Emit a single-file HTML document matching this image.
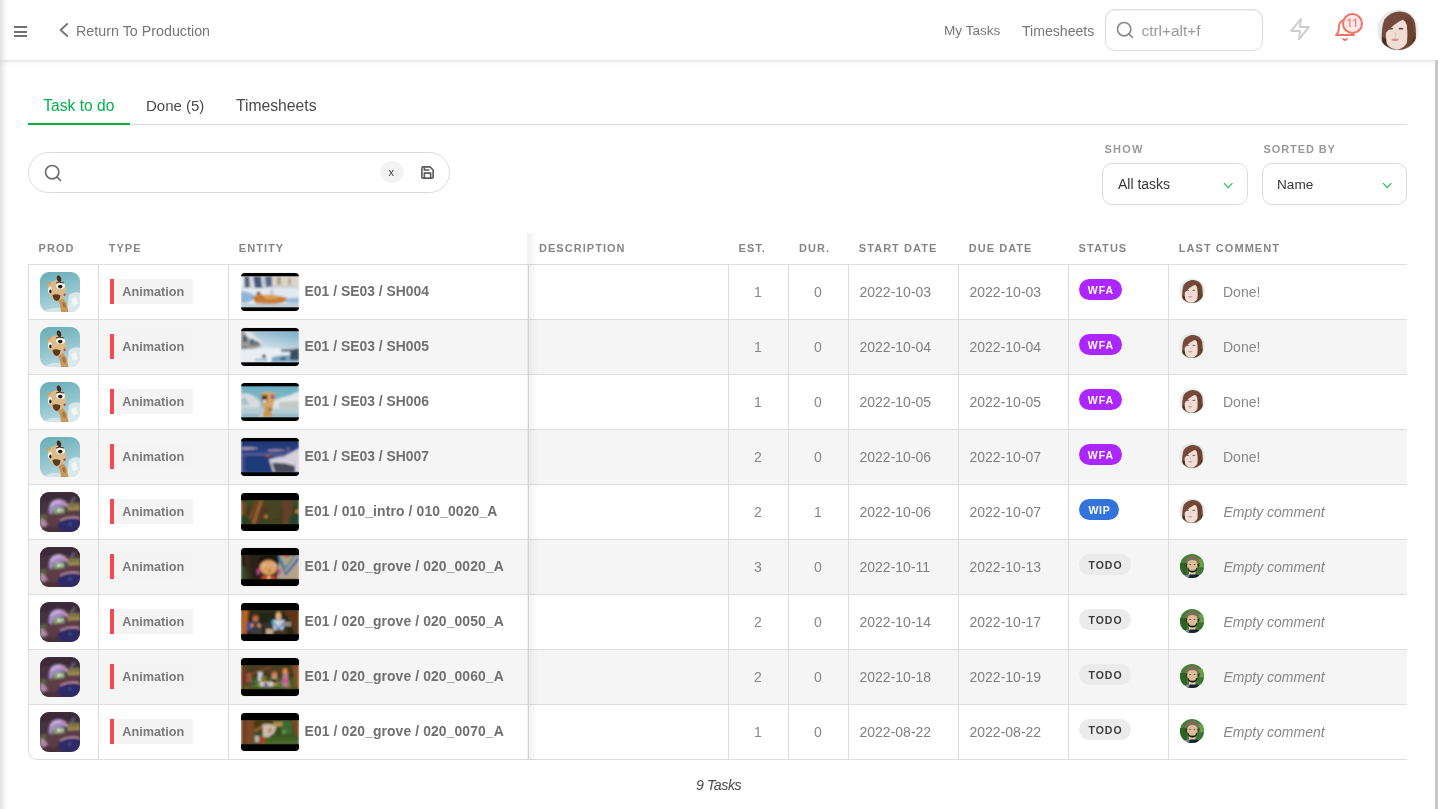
<!DOCTYPE html><html><head><meta charset="utf-8"><style>
html,body{margin:0;padding:0;background:#fff;width:1438px;height:809px;overflow:hidden;position:relative}
#root{position:absolute;left:0;top:0;width:1438px;height:809px;will-change:transform}
.t{position:absolute;white-space:nowrap;line-height:1;font-family:"Liberation Sans",sans-serif}
.c{text-align:center}
#topbar{position:absolute;left:0;top:0;width:1438px;height:60px;background:#fff;box-shadow:0 1px 5px rgba(0,0,0,0.15)}
#lshadow{position:absolute;left:0;top:0;width:8px;height:809px;background:linear-gradient(to right,rgba(0,0,0,0.12),rgba(0,0,0,0.03) 60%,rgba(0,0,0,0))}
#sbar{position:absolute;left:1435px;top:60px;width:3px;height:749px;background:#c8c8c8}
.prod{position:absolute;width:40px;height:40px;border-radius:9px;overflow:hidden}
.thumb{position:absolute;width:60px;height:39px;border-radius:3px;overflow:hidden;background:#000}
.av-woman,.av-man{position:absolute;border-radius:50%;overflow:hidden}
.av-woman{background:radial-gradient(ellipse 34% 40% at 50% 56%,#f0d6c6 0%,#e8c6b2 70%,rgba(0,0,0,0) 72%),radial-gradient(ellipse 48% 55% at 50% 50%,#6a3a2a 0%,#5a3022 75%,rgba(0,0,0,0) 77%),#e9ece8}
.av-man{background:radial-gradient(ellipse 28% 32% at 50% 48%,#d5ab88 0%,#c49a76 70%,rgba(0,0,0,0) 72%),radial-gradient(ellipse 40% 22% at 50% 100%,#1e2a34 0%,#1e2a34 90%,rgba(0,0,0,0) 92%),radial-gradient(ellipse 34% 28% at 50% 28%,#5a4030 0%,#5a4030 80%,rgba(0,0,0,0) 82%),#4f7f45}
.ice{background:radial-gradient(ellipse 22% 30% at 45% 40%,#c9a574 0%,#b58c5a 70%,rgba(0,0,0,0) 72%),linear-gradient(100deg,rgba(0,0,0,0) 50%,#b08050 51%,#c09060 62%,rgba(0,0,0,0) 63%),linear-gradient(160deg,#6fb3bb 0%,#8cc4cc 50%,#d6e8ec 100%)}
.mush{background:radial-gradient(ellipse 38% 24% at 45% 40%,#b7a3c6 0%,#9a86ad 70%,rgba(0,0,0,0) 72%),radial-gradient(ellipse 70% 30% at 60% 85%,#5b4a6a 0%,#4a3a58 70%,rgba(0,0,0,0) 72%),linear-gradient(160deg,#2e2436 0%,#3d3040 50%,#2a2030 100%)}
.t1{background:linear-gradient(#000 0,#000 4px,rgba(0,0,0,0) 4px,rgba(0,0,0,0) 35px,#000 35px),radial-gradient(ellipse 30% 14% at 45% 55%,#c88a4a,rgba(0,0,0,0) 80%),linear-gradient(#7c8ea0 4px,#a9b8c4 14px,#dfe8ee 20px,#c8d8e4 35px)}
.t2{background:linear-gradient(#000 0,#000 4px,rgba(0,0,0,0) 4px,rgba(0,0,0,0) 35px,#000 35px),linear-gradient(90deg,rgba(120,120,120,0.6) 0,rgba(0,0,0,0) 30%),linear-gradient(#8fb5cc 4px,#c6d8e2 16px,#e6eef2 24px,#b8c8d2 35px)}
.t3{background:linear-gradient(#000 0,#000 4px,rgba(0,0,0,0) 4px,rgba(0,0,0,0) 35px,#000 35px),radial-gradient(ellipse 16% 40% at 50% 55%,#c49a5a,rgba(0,0,0,0) 80%),linear-gradient(#7fb8d0 4px,#bcd6e0 18px,#e2ecef 24px,#a8c8d8 35px)}
.t4{background:linear-gradient(#000 0,#000 4px,rgba(0,0,0,0) 4px,rgba(0,0,0,0) 35px,#000 35px),linear-gradient(100deg,rgba(0,0,0,0) 55%,#c8c8d0 56%,#8a8a98 100%),linear-gradient(#2a3a6a 4px,#7a7aa0 14px,#3a4a7a 20px,#1a2a4a 35px)}
.t5{background:linear-gradient(#000 0,#000 6px,rgba(0,0,0,0) 6px,rgba(0,0,0,0) 32px,#000 32px),linear-gradient(90deg,#3a3018,#5a4a20 30%,#3a3a18 60%,#4a4020)}
.t6{background:linear-gradient(#000 0,#000 4px,rgba(0,0,0,0) 4px,rgba(0,0,0,0) 33px,#000 33px),radial-gradient(ellipse 18% 40% at 40% 55%,#d8a888,rgba(0,0,0,0) 80%),linear-gradient(90deg,#2a2a20,#4a3a2a 50%,#b8c0c8 70%,#3a5a7a)}
.t7{background:linear-gradient(#000 0,#000 4px,rgba(0,0,0,0) 4px,rgba(0,0,0,0) 33px,#000 33px),radial-gradient(ellipse 40% 40% at 55% 60%,#a89078,rgba(0,0,0,0) 80%),linear-gradient(90deg,#4a2a18,#3a2a20 50%,#5a3a20)}
.t8{background:linear-gradient(#000 0,#000 6px,rgba(0,0,0,0) 6px,rgba(0,0,0,0) 33px,#000 33px),linear-gradient(#3a3a20 6px,#4a5a30 20px,#5a6a30 33px)}
.t9{background:linear-gradient(#000 0,#000 6px,rgba(0,0,0,0) 6px,rgba(0,0,0,0) 33px,#000 33px),linear-gradient(90deg,#4a3020,#6a5a40 50%,#3a5a28)}
</style></head><body><div id="root"><div id="topbar"></div>
<div style="position:absolute;left:14px;top:26px;width:13px;height:2px;background:#727272"></div>
<div style="position:absolute;left:14px;top:30.5px;width:13px;height:2px;background:#727272"></div>
<div style="position:absolute;left:14px;top:35px;width:13px;height:2px;background:#727272"></div>
<svg style="position:absolute;left:56px;top:22px" width="16" height="16" viewBox="0 0 16 16"><polyline points="11.2,2 4.6,8 11.2,14" fill="none" stroke="#777" stroke-width="1.9" stroke-linecap="round" stroke-linejoin="round"/></svg>
<div class="t" style="left:76px;top:23.50px;font-size:14.3px;color:#777;font-weight:400;font-style:normal;letter-spacing:0px;">Return To Production</div>
<div class="t" style="left:944px;top:24.09px;font-size:13.6px;color:#777;font-weight:400;font-style:normal;letter-spacing:0px;">My Tasks</div>
<div class="t" style="left:1022px;top:23.66px;font-size:14.1px;color:#777;font-weight:400;font-style:normal;letter-spacing:0px;">Timesheets</div>
<div style="position:absolute;left:1105px;top:9px;width:156px;height:40px;border:1px solid #dcdcdc;border-radius:10px;box-shadow:inset 0 1px 2px rgba(0,0,0,0.06)"></div>
<svg style="position:absolute;left:1115px;top:20px" width="20" height="20" viewBox="0 0 24 24"><circle cx="11" cy="11" r="8" fill="none" stroke="#8a8a8a" stroke-width="2"/><line x1="21" y1="21" x2="16.65" y2="16.65" stroke="#8a8a8a" stroke-width="2" stroke-linecap="round"/></svg>
<div class="t" style="left:1141.5px;top:22.96px;font-size:15.4px;color:#9a9a9a;font-weight:400;font-style:normal;letter-spacing:0px;">ctrl+alt+f</div>
<svg style="position:absolute;left:1288px;top:17px" width="24" height="24" viewBox="0 0 24 24"><polygon points="13 2 3 14 12 14 11 22 21 10 12 10 13 2" fill="none" stroke="#cfcfcf" stroke-width="2" stroke-linejoin="round"/></svg>
<svg style="position:absolute;left:1333px;top:18px" width="24" height="24" viewBox="0 0 24 24"><path d="M18 8A6 6 0 0 0 6 8c0 7-3 9-3 9h18s-3-2-3-9" fill="none" stroke="#f07368" stroke-width="2" stroke-linecap="round" stroke-linejoin="round"/><path d="M13.73 21a2 2 0 0 1-3.46 0" fill="none" stroke="#f07368" stroke-width="2" stroke-linecap="round"/></svg>
<div style="position:absolute;left:1342px;top:13px;width:17px;height:17px;border:2px solid #f07368;border-radius:50%;background:#fde9e8;"></div>
<svg style="position:absolute;left:1340px;top:15px" width="24" height="16" viewBox="0 0 24 16"><path d="M7.3 5.9 L9.9 4.1 L9.9 12" fill="none" stroke="#f07368" stroke-width="1.15" stroke-linejoin="round"/><path d="M13.1 5.9 L15.7 4.1 L15.7 12" fill="none" stroke="#f07368" stroke-width="1.15" stroke-linejoin="round"/></svg>
<div style="position:absolute;left:1378px;top:10px;width:40px;height:40px;border-radius:20.0px;overflow:hidden;box-shadow:0 0 0 0.6px rgba(150,220,150,0.45);"><svg width="40" height="40" viewBox="0 0 24 24" preserveAspectRatio="none" style="display:block"><defs><filter id="wftop" filterUnits="userSpaceOnUse" x="0" y="0" width="24" height="24"><feGaussianBlur stdDeviation="0.27"/></filter></defs>
<rect width="24" height="24" fill="#e7e9ec"/>
<g filter="url(#wftop)">
<path d="M2.4 22 Q1.6 10 4 5.5 Q8 0.6 13.5 0.9 Q20.5 1.5 22.3 8 Q23.2 14 22.5 22 L19 24.5 L5 24.5Z" fill="#74483a"/>
<path d="M2.6 16 Q2.5 21 5 23 L6 18Z" fill="#4e2e24"/>
<path d="M21.8 15 Q22.2 21 19.5 23.5 L18.5 18Z" fill="#4e2e24"/>
<path d="M4.8 11 Q5.2 6 10 5 Q16 4.5 17.3 9 Q18 16 17.2 20 Q14.8 23.6 11.5 23.8 Q7.2 23.5 5.2 20 Q4.4 16 4.8 11Z" fill="#f0ddd3"/>
<path d="M3.6 13.5 Q4.2 4.5 11.5 3 Q15.8 2.6 17.2 4.8 Q12.5 6.6 9.8 8.8 Q7.2 11 4.6 13.8Z" fill="#74483a"/>
<path d="M16.2 4.2 Q18.6 10 18.2 21 L19.8 23 Q22.6 14 20.2 6Z" fill="#6a402f"/>
<ellipse cx="7.6" cy="11.2" rx="1.5" ry="0.55" fill="#6a4a42"/>
<ellipse cx="13.8" cy="11.2" rx="1.5" ry="0.55" fill="#6a4a42"/>
<path d="M10.2 13.5 Q11 15.5 10.6 15.8" stroke="#d8b8a8" stroke-width="0.6" fill="none"/>
<ellipse cx="10.3" cy="17.8" rx="2.2" ry="0.75" fill="#cf9c94"/>
</g></svg></div>
<div class="t" style="left:43.3px;top:97.59px;font-size:15.6px;color:#00b24a;font-weight:400;font-style:normal;letter-spacing:0px;">Task to do</div>
<div class="t" style="left:146px;top:98.10px;font-size:15px;color:#4a4a4a;font-weight:400;font-style:normal;letter-spacing:0px;">Done (5)</div>
<div class="t" style="left:236px;top:97.51px;font-size:15.7px;color:#4a4a4a;font-weight:400;font-style:normal;letter-spacing:0px;">Timesheets</div>
<div style="position:absolute;left:28px;top:124px;width:1379px;height:1px;background:#dbdbdb"></div>
<div style="position:absolute;left:28px;top:123px;width:102px;height:2px;background:#00b24a"></div>
<div style="position:absolute;left:28px;top:152px;width:420px;height:39px;border:1px solid #dbdbdb;border-radius:21px"></div>
<svg style="position:absolute;left:43px;top:163px" width="20" height="20" viewBox="0 0 24 24"><circle cx="11" cy="11" r="8" fill="none" stroke="#6e6e6e" stroke-width="2"/><line x1="21" y1="21" x2="16.65" y2="16.65" stroke="#6e6e6e" stroke-width="2" stroke-linecap="round"/></svg>
<div style="position:absolute;left:380px;top:161px;width:24px;height:22px;border-radius:50%;background:#f3f3f3"></div>
<div class="t" style="left:388.5px;top:166.69px;font-size:11px;color:#444;font-weight:400;font-style:normal;letter-spacing:0px;">x</div>
<svg style="position:absolute;left:420px;top:165px" width="15" height="15" viewBox="0 0 24 24"><path d="M19 21H5a2 2 0 0 1-2-2V5a2 2 0 0 1 2-2h11l5 5v11a2 2 0 0 1-2 2z" fill="none" stroke="#5a5a5a" stroke-width="2.6" stroke-linejoin="round"/><polyline points="17 21 17 13 7 13 7 21" fill="none" stroke="#5a5a5a" stroke-width="2.6"/><polyline points="7 3 7 8 15 8" fill="none" stroke="#5a5a5a" stroke-width="2.6"/></svg>
<div class="t" style="left:1104.5px;top:143.69px;font-size:11px;color:#999;font-weight:700;font-style:normal;letter-spacing:1.2px;">SHOW</div>
<div class="t" style="left:1263.5px;top:143.69px;font-size:11px;color:#999;font-weight:700;font-style:normal;letter-spacing:0.9px;">SORTED BY</div>
<div style="position:absolute;left:1102px;top:163px;width:144px;height:40px;border:1px solid #dbdbdb;border-radius:10px"></div>
<div class="t" style="left:1118px;top:177.25px;font-size:14px;color:#363636;font-weight:400;font-style:normal;letter-spacing:0px;">All tasks</div>
<svg style="position:absolute;left:1223px;top:182px" width="11" height="7" viewBox="0 0 11 7"><polyline points="1,1.2 5.2,5.6 9.4,1.2" fill="none" stroke="#1fbf55" stroke-width="1.15"/></svg>
<div style="position:absolute;left:1262px;top:163px;width:143px;height:40px;border:1px solid #dbdbdb;border-radius:10px"></div>
<div class="t" style="left:1277px;top:177.59px;font-size:13.6px;color:#363636;font-weight:400;font-style:normal;letter-spacing:0px;">Name</div>
<svg style="position:absolute;left:1382px;top:182px" width="11" height="7" viewBox="0 0 11 7"><polyline points="1,1.2 5.2,5.6 9.4,1.2" fill="none" stroke="#1fbf55" stroke-width="1.15"/></svg>
<div class="t" style="left:38.6px;top:243.09px;font-size:11px;color:#868686;font-weight:700;font-style:normal;letter-spacing:1.05px;">PROD</div>
<div class="t" style="left:108.7px;top:243.09px;font-size:11px;color:#868686;font-weight:700;font-style:normal;letter-spacing:1.05px;">TYPE</div>
<div class="t" style="left:238.8px;top:243.09px;font-size:11px;color:#868686;font-weight:700;font-style:normal;letter-spacing:1.05px;">ENTITY</div>
<div class="t" style="left:538.9px;top:243.09px;font-size:11px;color:#868686;font-weight:700;font-style:normal;letter-spacing:1.05px;">DESCRIPTION</div>
<div class="t" style="left:738.5px;top:243.09px;font-size:11px;color:#868686;font-weight:700;font-style:normal;letter-spacing:1.05px;">EST.</div>
<div class="t" style="left:799px;top:243.09px;font-size:11px;color:#868686;font-weight:700;font-style:normal;letter-spacing:1.05px;">DUR.</div>
<div class="t" style="left:858.8px;top:243.09px;font-size:11px;color:#868686;font-weight:700;font-style:normal;letter-spacing:1.05px;">START DATE</div>
<div class="t" style="left:968.7px;top:243.09px;font-size:11px;color:#868686;font-weight:700;font-style:normal;letter-spacing:1.05px;">DUE DATE</div>
<div class="t" style="left:1078.6px;top:243.09px;font-size:11px;color:#868686;font-weight:700;font-style:normal;letter-spacing:1.05px;">STATUS</div>
<div class="t" style="left:1178.8px;top:243.09px;font-size:11px;color:#868686;font-weight:700;font-style:normal;letter-spacing:1.05px;">LAST COMMENT</div>
<div style="position:absolute;left:28px;top:264px;width:1379px;height:495px;border-bottom-left-radius:8px;overflow:hidden">
<div style="position:absolute;left:0;top:55px;width:1379px;height:55px;background:#f5f5f5"></div>
<div style="position:absolute;left:0;top:165px;width:1379px;height:55px;background:#f5f5f5"></div>
<div style="position:absolute;left:0;top:275px;width:1379px;height:55px;background:#f5f5f5"></div>
<div style="position:absolute;left:0;top:385px;width:1379px;height:55px;background:#f5f5f5"></div>
</div>
<div style="position:absolute;left:28px;top:264px;width:1379px;height:1px;background:#dddddd"></div>
<div style="position:absolute;left:28px;top:319px;width:1379px;height:1px;background:#dddddd"></div>
<div style="position:absolute;left:28px;top:374px;width:1379px;height:1px;background:#dddddd"></div>
<div style="position:absolute;left:28px;top:429px;width:1379px;height:1px;background:#dddddd"></div>
<div style="position:absolute;left:28px;top:484px;width:1379px;height:1px;background:#dddddd"></div>
<div style="position:absolute;left:28px;top:539px;width:1379px;height:1px;background:#dddddd"></div>
<div style="position:absolute;left:28px;top:594px;width:1379px;height:1px;background:#dddddd"></div>
<div style="position:absolute;left:28px;top:649px;width:1379px;height:1px;background:#dddddd"></div>
<div style="position:absolute;left:28px;top:704px;width:1379px;height:1px;background:#dddddd"></div>
<div style="position:absolute;left:36px;top:759px;width:1371px;height:1px;background:#dddddd"></div>
<div style="position:absolute;left:28px;top:264px;width:1px;height:487px;background:#dddddd"></div>
<div style="position:absolute;left:98px;top:264px;width:1px;height:495px;background:#dddddd"></div>
<div style="position:absolute;left:228px;top:264px;width:1px;height:495px;background:#dddddd"></div>
<div style="position:absolute;left:528px;top:264px;width:1px;height:495px;background:#dddddd"></div>
<div style="position:absolute;left:728px;top:264px;width:1px;height:495px;background:#dddddd"></div>
<div style="position:absolute;left:788px;top:264px;width:1px;height:495px;background:#dddddd"></div>
<div style="position:absolute;left:848px;top:264px;width:1px;height:495px;background:#dddddd"></div>
<div style="position:absolute;left:958px;top:264px;width:1px;height:495px;background:#dddddd"></div>
<div style="position:absolute;left:1068px;top:264px;width:1px;height:495px;background:#dddddd"></div>
<div style="position:absolute;left:1168px;top:264px;width:1px;height:495px;background:#dddddd"></div>
<div style="position:absolute;left:28px;top:743px;width:16px;height:17px;border-left:1px solid #ddd;border-bottom:1px solid #ddd;border-bottom-left-radius:9px;box-sizing:border-box"></div>
<div style="position:absolute;left:527px;top:233px;width:11px;height:527px;background:linear-gradient(to right,rgba(0,0,0,0.06),rgba(0,0,0,0))"></div>
<div style="position:absolute;left:40px;top:272px;width:40px;height:40px;border-radius:9px;overflow:hidden;"><svg width="40" height="40" viewBox="0 0 40 40" preserveAspectRatio="none" style="display:block"><defs><linearGradient id="ig0" x1="0" y1="0" x2="0.3" y2="1"><stop offset="0" stop-color="#66acb5"/><stop offset="0.6" stop-color="#90c4cd"/><stop offset="1" stop-color="#b5d6dd"/></linearGradient>
<filter id="if0" filterUnits="userSpaceOnUse" x="0" y="0" width="40" height="40"><feGaussianBlur stdDeviation="0.75" edgeMode="duplicate"/></filter></defs>
<rect width="40" height="40" fill="url(#ig0)"/>
<g filter="url(#if0)">
<path d="M29 23 Q34 19 40 21 L40 40 L27 40 Z" fill="#dbe8ea"/>
<path d="M31 27 L36 25 L38 32 L33 34Z" fill="#f2f6f6"/>
<path d="M6 38 Q15 34 24 37 L24 40 L6 40Z" fill="#d2e4e8"/>
<path d="M19 24 Q24 26 26.5 31 L28.5 40 L21 40 Q20.5 32 17.5 28Z" fill="#c8975a"/>
<path d="M22 30 L25 31 L26 36 L23 35Z" fill="#a87040"/>
<path d="M8 13 Q12 8 18 8.5 Q25 10 26 17 Q26 23 22 27 Q18 30 14 28 Q9 25 8.5 19Z" fill="#dbbb8a"/>
<path d="M12.5 23 Q16 21.5 20.5 23.5 Q20 28.5 16.5 29 Q13 28 12.5 23Z" fill="#5a3a22"/>
<ellipse cx="20.5" cy="13.8" rx="4.4" ry="3.3" fill="#f6f2ec"/>
<ellipse cx="20.2" cy="14.6" rx="2.3" ry="1.8" fill="#2a1a10"/>
<path d="M16 11 Q19 9.5 24 11" stroke="#3a2414" stroke-width="0.9" fill="none"/>
<ellipse cx="10" cy="18.5" rx="2.1" ry="3.4" fill="#f2eee8"/>
<ellipse cx="10.4" cy="19.5" rx="1.2" ry="1.9" fill="#2a1a10"/>
<ellipse cx="19" cy="6.8" rx="2.1" ry="3.4" transform="rotate(-15 19 6.8)" fill="#4a2a1a"/>
<ellipse cx="8.8" cy="11.8" rx="2.4" ry="1.3" transform="rotate(-25 8.8 11.8)" fill="#c8a070"/>
<circle cx="24.6" cy="22.8" r="1.2" fill="#d04040"/>
</g></svg></div>
<div style="position:absolute;left:110px;top:279px;width:4px;height:25px;background:#f8474d"></div>
<div style="position:absolute;left:115px;top:279px;width:78px;height:25px;background:#f4f4f4"></div>
<div class="t" style="left:122.3px;top:286.05px;font-size:12.7px;color:#7a7a7a;font-weight:700;font-style:normal;letter-spacing:0px;">Animation</div>
<div style="position:absolute;left:241px;top:273px;width:58px;height:38px;border-radius:4px;overflow:hidden;box-shadow:0 0 1px rgba(0,0,0,0.3);"><svg width="58" height="38" viewBox="0 0 58 38" preserveAspectRatio="none" style="display:block"><defs><filter id="tf0" filterUnits="userSpaceOnUse" x="0" y="0" width="58" height="38"><feGaussianBlur stdDeviation="0.8" edgeMode="duplicate"/></filter></defs><g filter="url(#tf0)"><rect width="58" height="38" fill="#e2eaf1"/>
<rect y="3" width="58" height="12" fill="#c8ccd0"/>
<path d="M0 3 L4 3 L2 14 L0 14Z" fill="#e8ecf0"/>
<path d="M3 3 L8 3 L9 14 L4 15Z" fill="#4e6078"/>
<path d="M9 3 L12 3 L14 14 L10 14Z" fill="#d8dee4"/>
<path d="M12 3 L20 3 L22 15 L14 15Z" fill="#465874"/>
<path d="M20 3 L24 3 L24 14 L21 14Z" fill="#c8d0d8"/>
<path d="M24 3 L31 3 L32 13 L25 14Z" fill="#56688a"/>
<path d="M31 3 L58 3 L58 13 Q45 14 31 13Z" fill="#dcd4c8"/>
<path d="M36 4 L40 4 L40 12 L36 12Z" fill="#a8a090"/>
<path d="M47 5 L50 5 L50 12 L47 12Z" fill="#b0a898"/>
<path d="M0 18 Q10 19 16 24 Q10 30 0 30Z" fill="#8fb4d8"/>
<path d="M44 26 Q52 24 58 25 L58 30 Q50 31 44 29Z" fill="#94b8d8"/>
<path d="M0 31 L58 31 L58 34.3 L0 34.3Z" fill="#b8c8d0"/>
<path d="M12 25 Q16 19 22 22 Q32 21 46 25 Q45 30 36 30.5 Q24 31 14 30Z" fill="#c87a30"/>
<path d="M22 22 Q30 22 40 24 Q34 27 24 26Z" fill="#e0a050"/>
<ellipse cx="17.5" cy="20" rx="2.2" ry="1.3" fill="#8a2a40"/>
<path d="M29 17 L32 16 L33 22 L29 22Z" fill="#c8c8d0"/></g><rect y="0" width="58" height="3.3" fill="#000"/><rect y="34.3" width="58" height="3.7" fill="#000"/></svg></div>
<div class="t" style="left:304.6px;top:285.03px;font-size:13.9px;color:#707070;font-weight:700;font-style:normal;letter-spacing:0px;">E01 / SE03 / SH004</div>
<div class="t c" style="left:728px;width:60px;top:285.05px;font-size:14px;color:#888">1</div>
<div class="t c" style="left:788px;width:60px;top:285.05px;font-size:14px;color:#888">0</div>
<div class="t" style="left:859.5px;top:285.15px;font-size:14px;color:#808080;font-weight:400;font-style:normal;letter-spacing:0px;">2022-10-03</div>
<div class="t" style="left:969.5px;top:285.15px;font-size:14px;color:#808080;font-weight:400;font-style:normal;letter-spacing:0px;">2022-10-03</div>
<div style="position:absolute;left:1079px;top:279px;width:43px;height:21px;border-radius:11px;background:#ab26ff"></div>
<div class="t c" style="left:1079px;width:43px;top:285.31px;font-size:10.5px;font-weight:700;color:#fff;letter-spacing:1px;text-indent:1px">WFA</div>
<div style="position:absolute;left:1180px;top:279px;width:24px;height:24px;border-radius:12.0px;overflow:hidden;box-shadow:0 0 0 0.6px rgba(150,220,150,0.45);"><svg width="24" height="24" viewBox="0 0 24 24" preserveAspectRatio="none" style="display:block"><defs><filter id="wf0" filterUnits="userSpaceOnUse" x="0" y="0" width="24" height="24"><feGaussianBlur stdDeviation="0.45"/></filter></defs>
<rect width="24" height="24" fill="#e7e9ec"/>
<g filter="url(#wf0)">
<path d="M2.4 22 Q1.6 10 4 5.5 Q8 0.6 13.5 0.9 Q20.5 1.5 22.3 8 Q23.2 14 22.5 22 L19 24.5 L5 24.5Z" fill="#74483a"/>
<path d="M2.6 16 Q2.5 21 5 23 L6 18Z" fill="#4e2e24"/>
<path d="M21.8 15 Q22.2 21 19.5 23.5 L18.5 18Z" fill="#4e2e24"/>
<path d="M4.8 11 Q5.2 6 10 5 Q16 4.5 17.3 9 Q18 16 17.2 20 Q14.8 23.6 11.5 23.8 Q7.2 23.5 5.2 20 Q4.4 16 4.8 11Z" fill="#f0ddd3"/>
<path d="M3.6 13.5 Q4.2 4.5 11.5 3 Q15.8 2.6 17.2 4.8 Q12.5 6.6 9.8 8.8 Q7.2 11 4.6 13.8Z" fill="#74483a"/>
<path d="M16.2 4.2 Q18.6 10 18.2 21 L19.8 23 Q22.6 14 20.2 6Z" fill="#6a402f"/>
<ellipse cx="7.6" cy="11.2" rx="1.5" ry="0.55" fill="#6a4a42"/>
<ellipse cx="13.8" cy="11.2" rx="1.5" ry="0.55" fill="#6a4a42"/>
<path d="M10.2 13.5 Q11 15.5 10.6 15.8" stroke="#d8b8a8" stroke-width="0.6" fill="none"/>
<ellipse cx="10.3" cy="17.8" rx="2.2" ry="0.75" fill="#cf9c94"/>
</g></svg></div>
<div class="t" style="left:1223px;top:284.95px;font-size:14px;color:#888;font-weight:400;font-style:normal;letter-spacing:0px;">Done!</div>
<div style="position:absolute;left:40px;top:327px;width:40px;height:40px;border-radius:9px;overflow:hidden;"><svg width="40" height="40" viewBox="0 0 40 40" preserveAspectRatio="none" style="display:block"><defs><linearGradient id="ig1" x1="0" y1="0" x2="0.3" y2="1"><stop offset="0" stop-color="#66acb5"/><stop offset="0.6" stop-color="#90c4cd"/><stop offset="1" stop-color="#b5d6dd"/></linearGradient>
<filter id="if1" filterUnits="userSpaceOnUse" x="0" y="0" width="40" height="40"><feGaussianBlur stdDeviation="0.75" edgeMode="duplicate"/></filter></defs>
<rect width="40" height="40" fill="url(#ig1)"/>
<g filter="url(#if1)">
<path d="M29 23 Q34 19 40 21 L40 40 L27 40 Z" fill="#dbe8ea"/>
<path d="M31 27 L36 25 L38 32 L33 34Z" fill="#f2f6f6"/>
<path d="M6 38 Q15 34 24 37 L24 40 L6 40Z" fill="#d2e4e8"/>
<path d="M19 24 Q24 26 26.5 31 L28.5 40 L21 40 Q20.5 32 17.5 28Z" fill="#c8975a"/>
<path d="M22 30 L25 31 L26 36 L23 35Z" fill="#a87040"/>
<path d="M8 13 Q12 8 18 8.5 Q25 10 26 17 Q26 23 22 27 Q18 30 14 28 Q9 25 8.5 19Z" fill="#dbbb8a"/>
<path d="M12.5 23 Q16 21.5 20.5 23.5 Q20 28.5 16.5 29 Q13 28 12.5 23Z" fill="#5a3a22"/>
<ellipse cx="20.5" cy="13.8" rx="4.4" ry="3.3" fill="#f6f2ec"/>
<ellipse cx="20.2" cy="14.6" rx="2.3" ry="1.8" fill="#2a1a10"/>
<path d="M16 11 Q19 9.5 24 11" stroke="#3a2414" stroke-width="0.9" fill="none"/>
<ellipse cx="10" cy="18.5" rx="2.1" ry="3.4" fill="#f2eee8"/>
<ellipse cx="10.4" cy="19.5" rx="1.2" ry="1.9" fill="#2a1a10"/>
<ellipse cx="19" cy="6.8" rx="2.1" ry="3.4" transform="rotate(-15 19 6.8)" fill="#4a2a1a"/>
<ellipse cx="8.8" cy="11.8" rx="2.4" ry="1.3" transform="rotate(-25 8.8 11.8)" fill="#c8a070"/>
<circle cx="24.6" cy="22.8" r="1.2" fill="#d04040"/>
</g></svg></div>
<div style="position:absolute;left:110px;top:334px;width:4px;height:25px;background:#f8474d"></div>
<div style="position:absolute;left:115px;top:334px;width:78px;height:25px;background:#f4f4f4"></div>
<div class="t" style="left:122.3px;top:341.05px;font-size:12.7px;color:#7a7a7a;font-weight:700;font-style:normal;letter-spacing:0px;">Animation</div>
<div style="position:absolute;left:241px;top:328px;width:58px;height:38px;border-radius:4px;overflow:hidden;box-shadow:0 0 1px rgba(0,0,0,0.3);"><svg width="58" height="38" viewBox="0 0 58 38" preserveAspectRatio="none" style="display:block"><defs><filter id="tf1" filterUnits="userSpaceOnUse" x="0" y="0" width="58" height="38"><feGaussianBlur stdDeviation="0.8" edgeMode="duplicate"/></filter></defs><g filter="url(#tf1)"><rect width="58" height="38" fill="#e6ecf0"/>
<defs><linearGradient id="s2" x1="1" y1="0" x2="0.3" y2="1"><stop offset="0" stop-color="#72aac6"/><stop offset="1" stop-color="#dfe7ec"/></linearGradient></defs>
<rect y="3" width="58" height="18" fill="url(#s2)"/>
<path d="M0 3 L8 3 Q14 6 14 8 Q24 14 20 18 L12 22 L0 26Z" fill="#e0e4e6"/>
<path d="M0 3 L3 3 L7 10 L12 12 L18 14 L21 18 L12 21 L0 24Z" fill="#9a9894"/>
<path d="M2 8 L6 8 L6 14 L2 14Z" fill="#4a5a6a"/><path d="M9 11 L13 11 L14 17 L9 17Z" fill="#5a6878"/><path d="M14 13 L17 13 L18 18 L14 18Z" fill="#6a7888"/>
<path d="M0 19 L6 19 L6 25 L0 25Z" fill="#5a6a78"/>
<path d="M0 21 Q25 20 58 21 L58 34.3 L0 34.3Z" fill="#e8eef2"/>
<path d="M31 29 Q45 26 58 27 L58 34.3 L30 34.3Z" fill="#7aa8c8"/>
<path d="M40 21 L51 21 L51 24 L40 24Z" fill="#6a7a8a"/>
<path d="M49 22 L58 20 L58 32 L49 32Z" fill="#3e4e5e"/>
<ellipse cx="23" cy="28" rx="2" ry="1.5" fill="#222"/>
<path d="M39 30 L45 29 L45 32 L39 32Z" fill="#4a4a4a"/>
<path d="M14 31 L26 30 L26 33 L14 33Z" fill="#9ab8d0"/></g><rect y="0" width="58" height="3.3" fill="#000"/><rect y="34.3" width="58" height="3.7" fill="#000"/></svg></div>
<div class="t" style="left:304.6px;top:340.03px;font-size:13.9px;color:#707070;font-weight:700;font-style:normal;letter-spacing:0px;">E01 / SE03 / SH005</div>
<div class="t c" style="left:728px;width:60px;top:340.05px;font-size:14px;color:#888">1</div>
<div class="t c" style="left:788px;width:60px;top:340.05px;font-size:14px;color:#888">0</div>
<div class="t" style="left:859.5px;top:340.15px;font-size:14px;color:#808080;font-weight:400;font-style:normal;letter-spacing:0px;">2022-10-04</div>
<div class="t" style="left:969.5px;top:340.15px;font-size:14px;color:#808080;font-weight:400;font-style:normal;letter-spacing:0px;">2022-10-04</div>
<div style="position:absolute;left:1079px;top:334px;width:43px;height:21px;border-radius:11px;background:#ab26ff"></div>
<div class="t c" style="left:1079px;width:43px;top:340.31px;font-size:10.5px;font-weight:700;color:#fff;letter-spacing:1px;text-indent:1px">WFA</div>
<div style="position:absolute;left:1180px;top:334px;width:24px;height:24px;border-radius:12.0px;overflow:hidden;box-shadow:0 0 0 0.6px rgba(150,220,150,0.45);"><svg width="24" height="24" viewBox="0 0 24 24" preserveAspectRatio="none" style="display:block"><defs><filter id="wf1" filterUnits="userSpaceOnUse" x="0" y="0" width="24" height="24"><feGaussianBlur stdDeviation="0.45"/></filter></defs>
<rect width="24" height="24" fill="#e7e9ec"/>
<g filter="url(#wf1)">
<path d="M2.4 22 Q1.6 10 4 5.5 Q8 0.6 13.5 0.9 Q20.5 1.5 22.3 8 Q23.2 14 22.5 22 L19 24.5 L5 24.5Z" fill="#74483a"/>
<path d="M2.6 16 Q2.5 21 5 23 L6 18Z" fill="#4e2e24"/>
<path d="M21.8 15 Q22.2 21 19.5 23.5 L18.5 18Z" fill="#4e2e24"/>
<path d="M4.8 11 Q5.2 6 10 5 Q16 4.5 17.3 9 Q18 16 17.2 20 Q14.8 23.6 11.5 23.8 Q7.2 23.5 5.2 20 Q4.4 16 4.8 11Z" fill="#f0ddd3"/>
<path d="M3.6 13.5 Q4.2 4.5 11.5 3 Q15.8 2.6 17.2 4.8 Q12.5 6.6 9.8 8.8 Q7.2 11 4.6 13.8Z" fill="#74483a"/>
<path d="M16.2 4.2 Q18.6 10 18.2 21 L19.8 23 Q22.6 14 20.2 6Z" fill="#6a402f"/>
<ellipse cx="7.6" cy="11.2" rx="1.5" ry="0.55" fill="#6a4a42"/>
<ellipse cx="13.8" cy="11.2" rx="1.5" ry="0.55" fill="#6a4a42"/>
<path d="M10.2 13.5 Q11 15.5 10.6 15.8" stroke="#d8b8a8" stroke-width="0.6" fill="none"/>
<ellipse cx="10.3" cy="17.8" rx="2.2" ry="0.75" fill="#cf9c94"/>
</g></svg></div>
<div class="t" style="left:1223px;top:339.95px;font-size:14px;color:#888;font-weight:400;font-style:normal;letter-spacing:0px;">Done!</div>
<div style="position:absolute;left:40px;top:382px;width:40px;height:40px;border-radius:9px;overflow:hidden;"><svg width="40" height="40" viewBox="0 0 40 40" preserveAspectRatio="none" style="display:block"><defs><linearGradient id="ig2" x1="0" y1="0" x2="0.3" y2="1"><stop offset="0" stop-color="#66acb5"/><stop offset="0.6" stop-color="#90c4cd"/><stop offset="1" stop-color="#b5d6dd"/></linearGradient>
<filter id="if2" filterUnits="userSpaceOnUse" x="0" y="0" width="40" height="40"><feGaussianBlur stdDeviation="0.75" edgeMode="duplicate"/></filter></defs>
<rect width="40" height="40" fill="url(#ig2)"/>
<g filter="url(#if2)">
<path d="M29 23 Q34 19 40 21 L40 40 L27 40 Z" fill="#dbe8ea"/>
<path d="M31 27 L36 25 L38 32 L33 34Z" fill="#f2f6f6"/>
<path d="M6 38 Q15 34 24 37 L24 40 L6 40Z" fill="#d2e4e8"/>
<path d="M19 24 Q24 26 26.5 31 L28.5 40 L21 40 Q20.5 32 17.5 28Z" fill="#c8975a"/>
<path d="M22 30 L25 31 L26 36 L23 35Z" fill="#a87040"/>
<path d="M8 13 Q12 8 18 8.5 Q25 10 26 17 Q26 23 22 27 Q18 30 14 28 Q9 25 8.5 19Z" fill="#dbbb8a"/>
<path d="M12.5 23 Q16 21.5 20.5 23.5 Q20 28.5 16.5 29 Q13 28 12.5 23Z" fill="#5a3a22"/>
<ellipse cx="20.5" cy="13.8" rx="4.4" ry="3.3" fill="#f6f2ec"/>
<ellipse cx="20.2" cy="14.6" rx="2.3" ry="1.8" fill="#2a1a10"/>
<path d="M16 11 Q19 9.5 24 11" stroke="#3a2414" stroke-width="0.9" fill="none"/>
<ellipse cx="10" cy="18.5" rx="2.1" ry="3.4" fill="#f2eee8"/>
<ellipse cx="10.4" cy="19.5" rx="1.2" ry="1.9" fill="#2a1a10"/>
<ellipse cx="19" cy="6.8" rx="2.1" ry="3.4" transform="rotate(-15 19 6.8)" fill="#4a2a1a"/>
<ellipse cx="8.8" cy="11.8" rx="2.4" ry="1.3" transform="rotate(-25 8.8 11.8)" fill="#c8a070"/>
<circle cx="24.6" cy="22.8" r="1.2" fill="#d04040"/>
</g></svg></div>
<div style="position:absolute;left:110px;top:389px;width:4px;height:25px;background:#f8474d"></div>
<div style="position:absolute;left:115px;top:389px;width:78px;height:25px;background:#f4f4f4"></div>
<div class="t" style="left:122.3px;top:396.05px;font-size:12.7px;color:#7a7a7a;font-weight:700;font-style:normal;letter-spacing:0px;">Animation</div>
<div style="position:absolute;left:241px;top:383px;width:58px;height:38px;border-radius:4px;overflow:hidden;box-shadow:0 0 1px rgba(0,0,0,0.3);"><svg width="58" height="38" viewBox="0 0 58 38" preserveAspectRatio="none" style="display:block"><defs><filter id="tf2" filterUnits="userSpaceOnUse" x="0" y="0" width="58" height="38"><feGaussianBlur stdDeviation="0.8" edgeMode="duplicate"/></filter></defs><g filter="url(#tf2)"><defs><linearGradient id="s3" x1="0" y1="0" x2="0" y2="1"><stop offset="0" stop-color="#64aabe"/><stop offset="1" stop-color="#a8cfd8"/></linearGradient></defs>
<rect width="58" height="38" fill="url(#s3)"/>
<path d="M0 11 Q8 9 14 14 L19 18 L19 25 L0 25Z" fill="#d6dcde"/>
<path d="M0 15 L5 15 L8 22 L0 22Z" fill="#a8c0cc"/>
<path d="M32 18 Q42 14 50 12 Q55 9 58 9 L58 29 L32 26Z" fill="#e2e6e6"/>
<path d="M38 19 L58 18 L58 26 L38 25Z" fill="#c4c8c4"/>
<path d="M0 24.5 L58 26 L58 34.3 L0 34.3Z" fill="#b4ccd4"/>
<path d="M0 31 L58 31 L58 34.3 L0 34.3Z" fill="#98b4c0"/>
<path d="M17 34.3 Q19 30 24 30 L24 34.3Z" fill="#c8c8c0"/>
<path d="M20 10 Q27 8 34 10 L33 20 Q31 27 28 28 L25 28 Q21 24 21 19Z" fill="#d6a866"/>
<path d="M22 34.3 L24 24 L30 24 L31 34.3Z" fill="#c89650"/>
<path d="M20.5 12 L26.5 12 L26 19 L21 19Z" fill="#5a3018"/>
<path d="M21.5 17 L25.5 17 L25 19 L22 19Z" fill="#f0f0f0"/>
<path d="M29.5 11.5 L34 12 L33 16.5 L30 16Z" fill="#b04a6a"/>
<path d="M28 26 L31 25 L30 28Z" fill="#3a2010"/></g><rect y="0" width="58" height="3.3" fill="#000"/><rect y="34.3" width="58" height="3.7" fill="#000"/></svg></div>
<div class="t" style="left:304.6px;top:395.03px;font-size:13.9px;color:#707070;font-weight:700;font-style:normal;letter-spacing:0px;">E01 / SE03 / SH006</div>
<div class="t c" style="left:728px;width:60px;top:395.05px;font-size:14px;color:#888">1</div>
<div class="t c" style="left:788px;width:60px;top:395.05px;font-size:14px;color:#888">0</div>
<div class="t" style="left:859.5px;top:395.15px;font-size:14px;color:#808080;font-weight:400;font-style:normal;letter-spacing:0px;">2022-10-05</div>
<div class="t" style="left:969.5px;top:395.15px;font-size:14px;color:#808080;font-weight:400;font-style:normal;letter-spacing:0px;">2022-10-05</div>
<div style="position:absolute;left:1079px;top:389px;width:43px;height:21px;border-radius:11px;background:#ab26ff"></div>
<div class="t c" style="left:1079px;width:43px;top:395.31px;font-size:10.5px;font-weight:700;color:#fff;letter-spacing:1px;text-indent:1px">WFA</div>
<div style="position:absolute;left:1180px;top:389px;width:24px;height:24px;border-radius:12.0px;overflow:hidden;box-shadow:0 0 0 0.6px rgba(150,220,150,0.45);"><svg width="24" height="24" viewBox="0 0 24 24" preserveAspectRatio="none" style="display:block"><defs><filter id="wf2" filterUnits="userSpaceOnUse" x="0" y="0" width="24" height="24"><feGaussianBlur stdDeviation="0.45"/></filter></defs>
<rect width="24" height="24" fill="#e7e9ec"/>
<g filter="url(#wf2)">
<path d="M2.4 22 Q1.6 10 4 5.5 Q8 0.6 13.5 0.9 Q20.5 1.5 22.3 8 Q23.2 14 22.5 22 L19 24.5 L5 24.5Z" fill="#74483a"/>
<path d="M2.6 16 Q2.5 21 5 23 L6 18Z" fill="#4e2e24"/>
<path d="M21.8 15 Q22.2 21 19.5 23.5 L18.5 18Z" fill="#4e2e24"/>
<path d="M4.8 11 Q5.2 6 10 5 Q16 4.5 17.3 9 Q18 16 17.2 20 Q14.8 23.6 11.5 23.8 Q7.2 23.5 5.2 20 Q4.4 16 4.8 11Z" fill="#f0ddd3"/>
<path d="M3.6 13.5 Q4.2 4.5 11.5 3 Q15.8 2.6 17.2 4.8 Q12.5 6.6 9.8 8.8 Q7.2 11 4.6 13.8Z" fill="#74483a"/>
<path d="M16.2 4.2 Q18.6 10 18.2 21 L19.8 23 Q22.6 14 20.2 6Z" fill="#6a402f"/>
<ellipse cx="7.6" cy="11.2" rx="1.5" ry="0.55" fill="#6a4a42"/>
<ellipse cx="13.8" cy="11.2" rx="1.5" ry="0.55" fill="#6a4a42"/>
<path d="M10.2 13.5 Q11 15.5 10.6 15.8" stroke="#d8b8a8" stroke-width="0.6" fill="none"/>
<ellipse cx="10.3" cy="17.8" rx="2.2" ry="0.75" fill="#cf9c94"/>
</g></svg></div>
<div class="t" style="left:1223px;top:394.95px;font-size:14px;color:#888;font-weight:400;font-style:normal;letter-spacing:0px;">Done!</div>
<div style="position:absolute;left:40px;top:437px;width:40px;height:40px;border-radius:9px;overflow:hidden;"><svg width="40" height="40" viewBox="0 0 40 40" preserveAspectRatio="none" style="display:block"><defs><linearGradient id="ig3" x1="0" y1="0" x2="0.3" y2="1"><stop offset="0" stop-color="#66acb5"/><stop offset="0.6" stop-color="#90c4cd"/><stop offset="1" stop-color="#b5d6dd"/></linearGradient>
<filter id="if3" filterUnits="userSpaceOnUse" x="0" y="0" width="40" height="40"><feGaussianBlur stdDeviation="0.75" edgeMode="duplicate"/></filter></defs>
<rect width="40" height="40" fill="url(#ig3)"/>
<g filter="url(#if3)">
<path d="M29 23 Q34 19 40 21 L40 40 L27 40 Z" fill="#dbe8ea"/>
<path d="M31 27 L36 25 L38 32 L33 34Z" fill="#f2f6f6"/>
<path d="M6 38 Q15 34 24 37 L24 40 L6 40Z" fill="#d2e4e8"/>
<path d="M19 24 Q24 26 26.5 31 L28.5 40 L21 40 Q20.5 32 17.5 28Z" fill="#c8975a"/>
<path d="M22 30 L25 31 L26 36 L23 35Z" fill="#a87040"/>
<path d="M8 13 Q12 8 18 8.5 Q25 10 26 17 Q26 23 22 27 Q18 30 14 28 Q9 25 8.5 19Z" fill="#dbbb8a"/>
<path d="M12.5 23 Q16 21.5 20.5 23.5 Q20 28.5 16.5 29 Q13 28 12.5 23Z" fill="#5a3a22"/>
<ellipse cx="20.5" cy="13.8" rx="4.4" ry="3.3" fill="#f6f2ec"/>
<ellipse cx="20.2" cy="14.6" rx="2.3" ry="1.8" fill="#2a1a10"/>
<path d="M16 11 Q19 9.5 24 11" stroke="#3a2414" stroke-width="0.9" fill="none"/>
<ellipse cx="10" cy="18.5" rx="2.1" ry="3.4" fill="#f2eee8"/>
<ellipse cx="10.4" cy="19.5" rx="1.2" ry="1.9" fill="#2a1a10"/>
<ellipse cx="19" cy="6.8" rx="2.1" ry="3.4" transform="rotate(-15 19 6.8)" fill="#4a2a1a"/>
<ellipse cx="8.8" cy="11.8" rx="2.4" ry="1.3" transform="rotate(-25 8.8 11.8)" fill="#c8a070"/>
<circle cx="24.6" cy="22.8" r="1.2" fill="#d04040"/>
</g></svg></div>
<div style="position:absolute;left:110px;top:444px;width:4px;height:25px;background:#f8474d"></div>
<div style="position:absolute;left:115px;top:444px;width:78px;height:25px;background:#f4f4f4"></div>
<div class="t" style="left:122.3px;top:451.05px;font-size:12.7px;color:#7a7a7a;font-weight:700;font-style:normal;letter-spacing:0px;">Animation</div>
<div style="position:absolute;left:241px;top:438px;width:58px;height:38px;border-radius:4px;overflow:hidden;box-shadow:0 0 1px rgba(0,0,0,0.3);"><svg width="58" height="38" viewBox="0 0 58 38" preserveAspectRatio="none" style="display:block"><defs><filter id="tf3" filterUnits="userSpaceOnUse" x="0" y="0" width="58" height="38"><feGaussianBlur stdDeviation="0.8" edgeMode="duplicate"/></filter></defs><g filter="url(#tf3)"><defs><linearGradient id="s4" x1="0" y1="0" x2="0" y2="1"><stop offset="0" stop-color="#1c3472"/><stop offset="1" stop-color="#42589a"/></linearGradient></defs>
<rect width="58" height="38" fill="url(#s4)"/>
<path d="M1 9.5 Q10 8.5 18 10.5 Q10 12 1 11.5Z" fill="#b8a4b8"/>
<path d="M27 12 Q36 11 46 12.5 Q36 13.5 27 13.2Z" fill="#b898b0"/>
<path d="M0 15.8 L58 15.8 L58 17.4 L0 17.4Z" fill="#6a6a98"/>
<path d="M0 17.4 L32 17.4 L32 34.3 L0 34.3Z" fill="#1e3a78"/>
<path d="M0 17.4 L4 17.4 L4 34.3 L0 34.3Z" fill="#4a4a88"/>
<path d="M28 21.5 Q35 19 43 18.5 Q51 14 58 10.5 L58 34.3 L32 34.3 Q30 27 28 21.5Z" fill="#d4d0de"/>
<path d="M31 25 Q42 24 54 28 L54 34.3 L34 34.3Z" fill="#484858"/>
<path d="M24.5 17 L29.5 17 L29.5 19.5 L24.5 19.5Z" fill="#8a4a30"/>
<path d="M46 9 L48.6 9 L48.6 16 L46 16Z" fill="#6a5a8a"/></g><rect y="0" width="58" height="3.3" fill="#000"/><rect y="34.3" width="58" height="3.7" fill="#000"/></svg></div>
<div class="t" style="left:304.6px;top:450.03px;font-size:13.9px;color:#707070;font-weight:700;font-style:normal;letter-spacing:0px;">E01 / SE03 / SH007</div>
<div class="t c" style="left:728px;width:60px;top:450.05px;font-size:14px;color:#888">2</div>
<div class="t c" style="left:788px;width:60px;top:450.05px;font-size:14px;color:#888">0</div>
<div class="t" style="left:859.5px;top:450.15px;font-size:14px;color:#808080;font-weight:400;font-style:normal;letter-spacing:0px;">2022-10-06</div>
<div class="t" style="left:969.5px;top:450.15px;font-size:14px;color:#808080;font-weight:400;font-style:normal;letter-spacing:0px;">2022-10-07</div>
<div style="position:absolute;left:1079px;top:444px;width:43px;height:21px;border-radius:11px;background:#ab26ff"></div>
<div class="t c" style="left:1079px;width:43px;top:450.31px;font-size:10.5px;font-weight:700;color:#fff;letter-spacing:1px;text-indent:1px">WFA</div>
<div style="position:absolute;left:1180px;top:444px;width:24px;height:24px;border-radius:12.0px;overflow:hidden;box-shadow:0 0 0 0.6px rgba(150,220,150,0.45);"><svg width="24" height="24" viewBox="0 0 24 24" preserveAspectRatio="none" style="display:block"><defs><filter id="wf3" filterUnits="userSpaceOnUse" x="0" y="0" width="24" height="24"><feGaussianBlur stdDeviation="0.45"/></filter></defs>
<rect width="24" height="24" fill="#e7e9ec"/>
<g filter="url(#wf3)">
<path d="M2.4 22 Q1.6 10 4 5.5 Q8 0.6 13.5 0.9 Q20.5 1.5 22.3 8 Q23.2 14 22.5 22 L19 24.5 L5 24.5Z" fill="#74483a"/>
<path d="M2.6 16 Q2.5 21 5 23 L6 18Z" fill="#4e2e24"/>
<path d="M21.8 15 Q22.2 21 19.5 23.5 L18.5 18Z" fill="#4e2e24"/>
<path d="M4.8 11 Q5.2 6 10 5 Q16 4.5 17.3 9 Q18 16 17.2 20 Q14.8 23.6 11.5 23.8 Q7.2 23.5 5.2 20 Q4.4 16 4.8 11Z" fill="#f0ddd3"/>
<path d="M3.6 13.5 Q4.2 4.5 11.5 3 Q15.8 2.6 17.2 4.8 Q12.5 6.6 9.8 8.8 Q7.2 11 4.6 13.8Z" fill="#74483a"/>
<path d="M16.2 4.2 Q18.6 10 18.2 21 L19.8 23 Q22.6 14 20.2 6Z" fill="#6a402f"/>
<ellipse cx="7.6" cy="11.2" rx="1.5" ry="0.55" fill="#6a4a42"/>
<ellipse cx="13.8" cy="11.2" rx="1.5" ry="0.55" fill="#6a4a42"/>
<path d="M10.2 13.5 Q11 15.5 10.6 15.8" stroke="#d8b8a8" stroke-width="0.6" fill="none"/>
<ellipse cx="10.3" cy="17.8" rx="2.2" ry="0.75" fill="#cf9c94"/>
</g></svg></div>
<div class="t" style="left:1223px;top:449.95px;font-size:14px;color:#888;font-weight:400;font-style:normal;letter-spacing:0px;">Done!</div>
<div style="position:absolute;left:40px;top:492px;width:40px;height:40px;border-radius:9px;overflow:hidden;"><svg width="40" height="40" viewBox="0 0 40 40" preserveAspectRatio="none" style="display:block"><defs><filter id="mf4" filterUnits="userSpaceOnUse" x="0" y="0" width="40" height="40"><feGaussianBlur stdDeviation="0.8" edgeMode="duplicate"/></filter></defs>
<rect width="40" height="40" fill="#45333f"/>
<g filter="url(#mf4)">
<rect x="0" y="0" width="40" height="9" fill="#3e2c38"/>
<path d="M33 6 L36 5 L30 14 L28 14Z" fill="#6a6a88"/>
<path d="M27 12 Q34 10 40 11 L40 19 L27 19Z" fill="#7e7444"/>
<path d="M28 16 L40 15 L40 19 L28 19Z" fill="#a09050"/>
<path d="M0 22 L11 22 L11 28 L0 28Z" fill="#56603c"/>
<path d="M6 21 Q22 18 40 18 L40 35 L6 35Z" fill="#5c3c46"/>
<path d="M8.5 20 Q8 8.5 17.5 7.2 Q26.5 7 28.5 15.5 Q23 13.5 18 15.2 Q12.5 17 11.5 23Z" fill="#a48ac8"/>
<path d="M10.5 14 Q14 9.5 21 9.5" stroke="#d6bce2" stroke-width="1.8" fill="none"/>
<path d="M22 9.5 Q26 10.5 27.5 14" stroke="#e0a080" stroke-width="1.1" fill="none"/>
<path d="M13 16.5 Q19 14 25 16 L24 21 L14 22Z" fill="#86a070"/>
<circle cx="18.8" cy="18.4" r="1.4" fill="#f4f4f4"/><circle cx="22" cy="18" r="1" fill="#e8e8e8"/>
<path d="M21 28 Q30 23.5 40 27 L40 40 L17 40 Q17 31 21 28Z" fill="#2e2c66"/>
<path d="M20 28.5 Q30 23.5 40 26.5" stroke="#d8a8b8" stroke-width="1.1" fill="none"/>
<circle cx="30" cy="32" r="1" fill="#5a6ac8"/>
<path d="M0 26.5 Q5 26 7.5 32.5 L4.5 35 L0 34Z" fill="#b08aa2"/>
<path d="M0 36 L20 36 L20 40 L0 40Z" fill="#4c3038"/>
</g></svg></div>
<div style="position:absolute;left:110px;top:499px;width:4px;height:25px;background:#f8474d"></div>
<div style="position:absolute;left:115px;top:499px;width:78px;height:25px;background:#f4f4f4"></div>
<div class="t" style="left:122.3px;top:506.05px;font-size:12.7px;color:#7a7a7a;font-weight:700;font-style:normal;letter-spacing:0px;">Animation</div>
<div style="position:absolute;left:241px;top:493px;width:58px;height:38px;border-radius:4px;overflow:hidden;box-shadow:0 0 1px rgba(0,0,0,0.3);"><svg width="58" height="38" viewBox="0 0 58 38" preserveAspectRatio="none" style="display:block"><defs><filter id="tf4" filterUnits="userSpaceOnUse" x="0" y="0" width="58" height="38"><feGaussianBlur stdDeviation="0.8" edgeMode="duplicate"/></filter></defs><g filter="url(#tf4)"><rect width="58" height="38" fill="#404020"/>
<path d="M0 7 L58 7 L58 14 L0 14Z" fill="#3e4a24"/>
<path d="M26 10 L40 10 L38 26 L28 26Z" fill="#4a4222"/>
<path d="M14 7 L22 7 L14 31.3 L5 31.3Z" fill="#6e4424"/>
<path d="M19 7 L22 7 L14 31.3 L11 31.3Z" fill="#9a6030"/>
<path d="M22 12 L26 12 L20 28 L17 28Z" fill="#5a3420"/>
<path d="M41.6 7 L51.4 7 L50 31.3 L42 31.3Z" fill="#66402a"/>
<path d="M0 26 Q8 22 12 31.3 L0 31.3Z" fill="#24402a"/>
<path d="M48 24 Q55 20 58 22 L58 31.3 L48 31.3Z" fill="#24442e"/>
<path d="M0 10 L5 10 L4 22 L0 22Z" fill="#7a4822"/>
<circle cx="25" cy="23.4" r="1.5" fill="#e09040"/>
<circle cx="56" cy="18.5" r="1.8" fill="#d88838"/></g><rect y="0" width="58" height="7.1" fill="#000"/><rect y="31.3" width="58" height="6.7" fill="#000"/></svg></div>
<div class="t" style="left:304.6px;top:505.03px;font-size:13.9px;color:#707070;font-weight:700;font-style:normal;letter-spacing:0.13px;">E01 / 010_intro / 010_0020_A</div>
<div class="t c" style="left:728px;width:60px;top:505.05px;font-size:14px;color:#888">2</div>
<div class="t c" style="left:788px;width:60px;top:505.05px;font-size:14px;color:#888">1</div>
<div class="t" style="left:859.5px;top:505.15px;font-size:14px;color:#808080;font-weight:400;font-style:normal;letter-spacing:0px;">2022-10-06</div>
<div class="t" style="left:969.5px;top:505.15px;font-size:14px;color:#808080;font-weight:400;font-style:normal;letter-spacing:0px;">2022-10-07</div>
<div style="position:absolute;left:1079px;top:499px;width:40px;height:21px;border-radius:11px;background:#3273dc"></div>
<div class="t c" style="left:1079px;width:40px;top:505.31px;font-size:10.5px;font-weight:700;color:#fff;letter-spacing:0.8px;text-indent:1px">WIP</div>
<div style="position:absolute;left:1180px;top:499px;width:24px;height:24px;border-radius:12.0px;overflow:hidden;box-shadow:0 0 0 0.6px rgba(150,220,150,0.45);"><svg width="24" height="24" viewBox="0 0 24 24" preserveAspectRatio="none" style="display:block"><defs><filter id="wf4" filterUnits="userSpaceOnUse" x="0" y="0" width="24" height="24"><feGaussianBlur stdDeviation="0.45"/></filter></defs>
<rect width="24" height="24" fill="#e7e9ec"/>
<g filter="url(#wf4)">
<path d="M2.4 22 Q1.6 10 4 5.5 Q8 0.6 13.5 0.9 Q20.5 1.5 22.3 8 Q23.2 14 22.5 22 L19 24.5 L5 24.5Z" fill="#74483a"/>
<path d="M2.6 16 Q2.5 21 5 23 L6 18Z" fill="#4e2e24"/>
<path d="M21.8 15 Q22.2 21 19.5 23.5 L18.5 18Z" fill="#4e2e24"/>
<path d="M4.8 11 Q5.2 6 10 5 Q16 4.5 17.3 9 Q18 16 17.2 20 Q14.8 23.6 11.5 23.8 Q7.2 23.5 5.2 20 Q4.4 16 4.8 11Z" fill="#f0ddd3"/>
<path d="M3.6 13.5 Q4.2 4.5 11.5 3 Q15.8 2.6 17.2 4.8 Q12.5 6.6 9.8 8.8 Q7.2 11 4.6 13.8Z" fill="#74483a"/>
<path d="M16.2 4.2 Q18.6 10 18.2 21 L19.8 23 Q22.6 14 20.2 6Z" fill="#6a402f"/>
<ellipse cx="7.6" cy="11.2" rx="1.5" ry="0.55" fill="#6a4a42"/>
<ellipse cx="13.8" cy="11.2" rx="1.5" ry="0.55" fill="#6a4a42"/>
<path d="M10.2 13.5 Q11 15.5 10.6 15.8" stroke="#d8b8a8" stroke-width="0.6" fill="none"/>
<ellipse cx="10.3" cy="17.8" rx="2.2" ry="0.75" fill="#cf9c94"/>
</g></svg></div>
<div class="t" style="left:1223.5px;top:504.95px;font-size:14px;color:#888;font-weight:400;font-style:italic;letter-spacing:0px;">Empty comment</div>
<div style="position:absolute;left:40px;top:547px;width:40px;height:40px;border-radius:9px;overflow:hidden;"><svg width="40" height="40" viewBox="0 0 40 40" preserveAspectRatio="none" style="display:block"><defs><filter id="mf5" filterUnits="userSpaceOnUse" x="0" y="0" width="40" height="40"><feGaussianBlur stdDeviation="0.8" edgeMode="duplicate"/></filter></defs>
<rect width="40" height="40" fill="#45333f"/>
<g filter="url(#mf5)">
<rect x="0" y="0" width="40" height="9" fill="#3e2c38"/>
<path d="M33 6 L36 5 L30 14 L28 14Z" fill="#6a6a88"/>
<path d="M27 12 Q34 10 40 11 L40 19 L27 19Z" fill="#7e7444"/>
<path d="M28 16 L40 15 L40 19 L28 19Z" fill="#a09050"/>
<path d="M0 22 L11 22 L11 28 L0 28Z" fill="#56603c"/>
<path d="M6 21 Q22 18 40 18 L40 35 L6 35Z" fill="#5c3c46"/>
<path d="M8.5 20 Q8 8.5 17.5 7.2 Q26.5 7 28.5 15.5 Q23 13.5 18 15.2 Q12.5 17 11.5 23Z" fill="#a48ac8"/>
<path d="M10.5 14 Q14 9.5 21 9.5" stroke="#d6bce2" stroke-width="1.8" fill="none"/>
<path d="M22 9.5 Q26 10.5 27.5 14" stroke="#e0a080" stroke-width="1.1" fill="none"/>
<path d="M13 16.5 Q19 14 25 16 L24 21 L14 22Z" fill="#86a070"/>
<circle cx="18.8" cy="18.4" r="1.4" fill="#f4f4f4"/><circle cx="22" cy="18" r="1" fill="#e8e8e8"/>
<path d="M21 28 Q30 23.5 40 27 L40 40 L17 40 Q17 31 21 28Z" fill="#2e2c66"/>
<path d="M20 28.5 Q30 23.5 40 26.5" stroke="#d8a8b8" stroke-width="1.1" fill="none"/>
<circle cx="30" cy="32" r="1" fill="#5a6ac8"/>
<path d="M0 26.5 Q5 26 7.5 32.5 L4.5 35 L0 34Z" fill="#b08aa2"/>
<path d="M0 36 L20 36 L20 40 L0 40Z" fill="#4c3038"/>
</g></svg></div>
<div style="position:absolute;left:110px;top:554px;width:4px;height:25px;background:#f8474d"></div>
<div style="position:absolute;left:115px;top:554px;width:78px;height:25px;background:#f4f4f4"></div>
<div class="t" style="left:122.3px;top:561.05px;font-size:12.7px;color:#7a7a7a;font-weight:700;font-style:normal;letter-spacing:0px;">Animation</div>
<div style="position:absolute;left:241px;top:548px;width:58px;height:38px;border-radius:4px;overflow:hidden;box-shadow:0 0 1px rgba(0,0,0,0.3);"><svg width="58" height="38" viewBox="0 0 58 38" preserveAspectRatio="none" style="display:block"><defs><filter id="tf5" filterUnits="userSpaceOnUse" x="0" y="0" width="58" height="38"><feGaussianBlur stdDeviation="0.8" edgeMode="duplicate"/></filter></defs><g filter="url(#tf5)"><rect width="58" height="38" fill="#2a2216"/>
<path d="M0 18 Q6 16 11 31.3 L0 31.3Z" fill="#34482a"/>
<path d="M4 7 L8 7 L10 31.3 L6 31.3Z" fill="#3a2a1e"/>
<path d="M38 7 L58 7 L58 31.3 L36 31.3Z" fill="#b4a486"/>
<path d="M39 7 L52 7 L46 10Z" fill="#b8602a"/>
<path d="M38 7 L44.5 25 L58 8 L58 12 L44.5 28 L37 10Z" fill="#2a5ab0"/>
<path d="M38.5 7 L44.5 19 L53 7 L55 7 L44.5 22 L37.5 9Z" fill="#2a8a9a"/>
<path d="M17 13 Q18 7 27 7 Q37 7 38 14 L37 18 L18 18Z" fill="#1a1410"/>
<ellipse cx="27.5" cy="19.5" rx="9" ry="7.5" fill="#e0a060"/>
<path d="M18 15 Q22 10 28 11 Q34 10 37 15 L37 13 Q33 8 28 8 Q22 8 18 13Z" fill="#1a1410"/>
<ellipse cx="24.5" cy="17.2" rx="2" ry="1.3" fill="#f0f0f0"/><circle cx="24.8" cy="17.4" r="0.8" fill="#111"/>
<ellipse cx="32.5" cy="17.2" rx="2" ry="1.3" fill="#f0f0f0"/><circle cx="32.2" cy="17.4" r="0.8" fill="#111"/>
<ellipse cx="28.5" cy="23" rx="1.2" ry="0.8" fill="#5a2a1a"/>
<path d="M16 21 L18.5 21 L18.5 26.5 L16 26.5Z" fill="#c040a0"/>
<path d="M37 21 L39.5 21 L39.5 26.5 L37 26.5Z" fill="#c040a0"/>
<path d="M21 28 L34 28 L35 31.3 L20 31.3Z" fill="#d04a20"/>
<path d="M26.5 28 L29 28 L29 31.3 L26.5 31.3Z" fill="#f0d0a0"/></g><rect y="0" width="58" height="7.1" fill="#000"/><rect y="31.3" width="58" height="6.7" fill="#000"/></svg></div>
<div class="t" style="left:304.6px;top:560.03px;font-size:13.9px;color:#707070;font-weight:700;font-style:normal;letter-spacing:0.11px;">E01 / 020_grove / 020_0020_A</div>
<div class="t c" style="left:728px;width:60px;top:560.05px;font-size:14px;color:#888">3</div>
<div class="t c" style="left:788px;width:60px;top:560.05px;font-size:14px;color:#888">0</div>
<div class="t" style="left:859.5px;top:560.15px;font-size:14px;color:#808080;font-weight:400;font-style:normal;letter-spacing:0px;">2022-10-11</div>
<div class="t" style="left:969.5px;top:560.15px;font-size:14px;color:#808080;font-weight:400;font-style:normal;letter-spacing:0px;">2022-10-13</div>
<div style="position:absolute;left:1079px;top:554px;width:52px;height:21px;border-radius:11px;background:#ebebeb"></div>
<div class="t c" style="left:1079px;width:52px;top:560.31px;font-size:10.5px;font-weight:700;color:#3c3c3c;letter-spacing:1px;text-indent:1px">TODO</div>
<div style="position:absolute;left:1180px;top:554px;width:24px;height:24px;border-radius:12.0px;overflow:hidden;"><svg width="24" height="24" viewBox="0 0 24 24" preserveAspectRatio="none" style="display:block"><defs><filter id="mnf5" filterUnits="userSpaceOnUse" x="0" y="0" width="24" height="24"><feGaussianBlur stdDeviation="0.55" edgeMode="duplicate"/></filter></defs>
<rect width="24" height="24" fill="#437f36"/>
<g filter="url(#mnf5)">
<rect x="0" y="9" width="7" height="12" fill="#2e6428"/>
<rect x="18" y="5" width="6" height="8" fill="#62a244"/>
<rect x="17" y="14" width="7" height="6" fill="#3a7430"/>
<path d="M3 24 Q5 19.5 12 19.5 Q19 19.5 21 24Z" fill="#182030"/>
<path d="M5 21.5 Q7 19.5 10 20 L9 23 L5 24Z" fill="#7a8a9a"/>
<rect x="9" y="15" width="6.5" height="5.5" fill="#e6cca8"/>
<ellipse cx="12.4" cy="11.2" rx="5.3" ry="6.3" fill="#dcbc9a"/>
<path d="M7.3 13.5 Q8 18.5 12.4 18.6 Q16.8 18.5 17.5 13.5 L16.5 13.8 Q15.5 17 12.4 17 Q9.3 17 8.3 13.8Z" fill="#1e1812"/>
<path d="M11.2 16.8 L13.6 16.8 L12.4 18.5Z" fill="#1e1812"/>
<path d="M5.5 11 Q4.8 2 12.2 1.6 Q19.8 2 19.5 11 L18 8.5 Q17 6 12.2 6 Q7.6 6 6.8 9Z" fill="#7e6c5a"/>
<path d="M5.5 9 Q5 12 6.5 14 L7.3 10Z" fill="#3a2e22"/>
<path d="M19.5 9 Q20 12 18 14 L17.4 10Z" fill="#3a2e22"/>
<ellipse cx="10.2" cy="10.6" rx="0.9" ry="0.5" fill="#5a4a3a"/>
<ellipse cx="14.6" cy="10.6" rx="0.9" ry="0.5" fill="#5a4a3a"/>
</g></svg></div>
<div class="t" style="left:1223.5px;top:559.95px;font-size:14px;color:#888;font-weight:400;font-style:italic;letter-spacing:0px;">Empty comment</div>
<div style="position:absolute;left:40px;top:602px;width:40px;height:40px;border-radius:9px;overflow:hidden;"><svg width="40" height="40" viewBox="0 0 40 40" preserveAspectRatio="none" style="display:block"><defs><filter id="mf6" filterUnits="userSpaceOnUse" x="0" y="0" width="40" height="40"><feGaussianBlur stdDeviation="0.8" edgeMode="duplicate"/></filter></defs>
<rect width="40" height="40" fill="#45333f"/>
<g filter="url(#mf6)">
<rect x="0" y="0" width="40" height="9" fill="#3e2c38"/>
<path d="M33 6 L36 5 L30 14 L28 14Z" fill="#6a6a88"/>
<path d="M27 12 Q34 10 40 11 L40 19 L27 19Z" fill="#7e7444"/>
<path d="M28 16 L40 15 L40 19 L28 19Z" fill="#a09050"/>
<path d="M0 22 L11 22 L11 28 L0 28Z" fill="#56603c"/>
<path d="M6 21 Q22 18 40 18 L40 35 L6 35Z" fill="#5c3c46"/>
<path d="M8.5 20 Q8 8.5 17.5 7.2 Q26.5 7 28.5 15.5 Q23 13.5 18 15.2 Q12.5 17 11.5 23Z" fill="#a48ac8"/>
<path d="M10.5 14 Q14 9.5 21 9.5" stroke="#d6bce2" stroke-width="1.8" fill="none"/>
<path d="M22 9.5 Q26 10.5 27.5 14" stroke="#e0a080" stroke-width="1.1" fill="none"/>
<path d="M13 16.5 Q19 14 25 16 L24 21 L14 22Z" fill="#86a070"/>
<circle cx="18.8" cy="18.4" r="1.4" fill="#f4f4f4"/><circle cx="22" cy="18" r="1" fill="#e8e8e8"/>
<path d="M21 28 Q30 23.5 40 27 L40 40 L17 40 Q17 31 21 28Z" fill="#2e2c66"/>
<path d="M20 28.5 Q30 23.5 40 26.5" stroke="#d8a8b8" stroke-width="1.1" fill="none"/>
<circle cx="30" cy="32" r="1" fill="#5a6ac8"/>
<path d="M0 26.5 Q5 26 7.5 32.5 L4.5 35 L0 34Z" fill="#b08aa2"/>
<path d="M0 36 L20 36 L20 40 L0 40Z" fill="#4c3038"/>
</g></svg></div>
<div style="position:absolute;left:110px;top:609px;width:4px;height:25px;background:#f8474d"></div>
<div style="position:absolute;left:115px;top:609px;width:78px;height:25px;background:#f4f4f4"></div>
<div class="t" style="left:122.3px;top:616.05px;font-size:12.7px;color:#7a7a7a;font-weight:700;font-style:normal;letter-spacing:0px;">Animation</div>
<div style="position:absolute;left:241px;top:603px;width:58px;height:38px;border-radius:4px;overflow:hidden;box-shadow:0 0 1px rgba(0,0,0,0.3);"><svg width="58" height="38" viewBox="0 0 58 38" preserveAspectRatio="none" style="display:block"><defs><filter id="tf6" filterUnits="userSpaceOnUse" x="0" y="0" width="58" height="38"><feGaussianBlur stdDeviation="0.8" edgeMode="duplicate"/></filter></defs><g filter="url(#tf6)"><rect width="58" height="38" fill="#242616"/>
<path d="M0 7 L8 7 L6 31.3 L0 31.3Z" fill="#9a5222"/>
<path d="M3 8 L6 8 L4 30 L2 30Z" fill="#c86a28"/>
<path d="M43 7 L58 7 L58 31.3 L54 31.3 Q50 18 43 9Z" fill="#5e3618"/>
<path d="M8 7 Q29 6 43 7 L43 11 Q29 9 8 11Z" fill="#2e3218"/>
<path d="M6 20 L10 18 L11 29 L6 27Z" fill="#3050a0"/>
<path d="M9 19 Q14 17 20 19 L22 31.3 L10 31.3Z" fill="#3a3a3e"/>
<ellipse cx="14.5" cy="15.5" rx="3" ry="3.2" fill="#b87050"/>
<path d="M11.5 13 Q14.5 10.5 17.5 13 L17.5 14 L11.5 14Z" fill="#a04a20"/>
<path d="M9 22 L12 20 L13 23 L10 25Z" fill="#d09070"/><path d="M17 20 L20 22 L19 25 L16 23Z" fill="#d09070"/>
<ellipse cx="26" cy="23" rx="3.5" ry="4" fill="#3a3030"/>
<path d="M25 26 L32 26 L32 31.3 L25 31.3Z" fill="#c8a890"/>
<path d="M31 17 L44 17 L42 28 L33 28Z" fill="#c8d0dc"/>
<path d="M31 17 L37.5 25 L44 17 L44 19 L37.5 27 L31 19Z" fill="#2a60b0"/>
<path d="M30.5 17 L33 17 L33 22 L30.5 22Z" fill="#3aa0c0"/>
<ellipse cx="37.5" cy="13.5" rx="2.8" ry="3.5" fill="#e0b088"/>
<path d="M35.5 9.5 Q37.5 7.5 39.5 9.5 L39.5 11 L35.5 11Z" fill="#d8b040"/>
<path d="M42 19 L50 19 L50 23.4 L42 23.4Z" fill="#8a8a88"/>
<path d="M34 26.6 L46 26.6 L46 31.3 L34 31.3Z" fill="#4a3420"/></g><rect y="0" width="58" height="7.1" fill="#000"/><rect y="31.3" width="58" height="6.7" fill="#000"/></svg></div>
<div class="t" style="left:304.6px;top:615.03px;font-size:13.9px;color:#707070;font-weight:700;font-style:normal;letter-spacing:0.11px;">E01 / 020_grove / 020_0050_A</div>
<div class="t c" style="left:728px;width:60px;top:615.05px;font-size:14px;color:#888">2</div>
<div class="t c" style="left:788px;width:60px;top:615.05px;font-size:14px;color:#888">0</div>
<div class="t" style="left:859.5px;top:615.15px;font-size:14px;color:#808080;font-weight:400;font-style:normal;letter-spacing:0px;">2022-10-14</div>
<div class="t" style="left:969.5px;top:615.15px;font-size:14px;color:#808080;font-weight:400;font-style:normal;letter-spacing:0px;">2022-10-17</div>
<div style="position:absolute;left:1079px;top:609px;width:52px;height:21px;border-radius:11px;background:#ebebeb"></div>
<div class="t c" style="left:1079px;width:52px;top:615.31px;font-size:10.5px;font-weight:700;color:#3c3c3c;letter-spacing:1px;text-indent:1px">TODO</div>
<div style="position:absolute;left:1180px;top:609px;width:24px;height:24px;border-radius:12.0px;overflow:hidden;"><svg width="24" height="24" viewBox="0 0 24 24" preserveAspectRatio="none" style="display:block"><defs><filter id="mnf6" filterUnits="userSpaceOnUse" x="0" y="0" width="24" height="24"><feGaussianBlur stdDeviation="0.55" edgeMode="duplicate"/></filter></defs>
<rect width="24" height="24" fill="#437f36"/>
<g filter="url(#mnf6)">
<rect x="0" y="9" width="7" height="12" fill="#2e6428"/>
<rect x="18" y="5" width="6" height="8" fill="#62a244"/>
<rect x="17" y="14" width="7" height="6" fill="#3a7430"/>
<path d="M3 24 Q5 19.5 12 19.5 Q19 19.5 21 24Z" fill="#182030"/>
<path d="M5 21.5 Q7 19.5 10 20 L9 23 L5 24Z" fill="#7a8a9a"/>
<rect x="9" y="15" width="6.5" height="5.5" fill="#e6cca8"/>
<ellipse cx="12.4" cy="11.2" rx="5.3" ry="6.3" fill="#dcbc9a"/>
<path d="M7.3 13.5 Q8 18.5 12.4 18.6 Q16.8 18.5 17.5 13.5 L16.5 13.8 Q15.5 17 12.4 17 Q9.3 17 8.3 13.8Z" fill="#1e1812"/>
<path d="M11.2 16.8 L13.6 16.8 L12.4 18.5Z" fill="#1e1812"/>
<path d="M5.5 11 Q4.8 2 12.2 1.6 Q19.8 2 19.5 11 L18 8.5 Q17 6 12.2 6 Q7.6 6 6.8 9Z" fill="#7e6c5a"/>
<path d="M5.5 9 Q5 12 6.5 14 L7.3 10Z" fill="#3a2e22"/>
<path d="M19.5 9 Q20 12 18 14 L17.4 10Z" fill="#3a2e22"/>
<ellipse cx="10.2" cy="10.6" rx="0.9" ry="0.5" fill="#5a4a3a"/>
<ellipse cx="14.6" cy="10.6" rx="0.9" ry="0.5" fill="#5a4a3a"/>
</g></svg></div>
<div class="t" style="left:1223.5px;top:614.95px;font-size:14px;color:#888;font-weight:400;font-style:italic;letter-spacing:0px;">Empty comment</div>
<div style="position:absolute;left:40px;top:657px;width:40px;height:40px;border-radius:9px;overflow:hidden;"><svg width="40" height="40" viewBox="0 0 40 40" preserveAspectRatio="none" style="display:block"><defs><filter id="mf7" filterUnits="userSpaceOnUse" x="0" y="0" width="40" height="40"><feGaussianBlur stdDeviation="0.8" edgeMode="duplicate"/></filter></defs>
<rect width="40" height="40" fill="#45333f"/>
<g filter="url(#mf7)">
<rect x="0" y="0" width="40" height="9" fill="#3e2c38"/>
<path d="M33 6 L36 5 L30 14 L28 14Z" fill="#6a6a88"/>
<path d="M27 12 Q34 10 40 11 L40 19 L27 19Z" fill="#7e7444"/>
<path d="M28 16 L40 15 L40 19 L28 19Z" fill="#a09050"/>
<path d="M0 22 L11 22 L11 28 L0 28Z" fill="#56603c"/>
<path d="M6 21 Q22 18 40 18 L40 35 L6 35Z" fill="#5c3c46"/>
<path d="M8.5 20 Q8 8.5 17.5 7.2 Q26.5 7 28.5 15.5 Q23 13.5 18 15.2 Q12.5 17 11.5 23Z" fill="#a48ac8"/>
<path d="M10.5 14 Q14 9.5 21 9.5" stroke="#d6bce2" stroke-width="1.8" fill="none"/>
<path d="M22 9.5 Q26 10.5 27.5 14" stroke="#e0a080" stroke-width="1.1" fill="none"/>
<path d="M13 16.5 Q19 14 25 16 L24 21 L14 22Z" fill="#86a070"/>
<circle cx="18.8" cy="18.4" r="1.4" fill="#f4f4f4"/><circle cx="22" cy="18" r="1" fill="#e8e8e8"/>
<path d="M21 28 Q30 23.5 40 27 L40 40 L17 40 Q17 31 21 28Z" fill="#2e2c66"/>
<path d="M20 28.5 Q30 23.5 40 26.5" stroke="#d8a8b8" stroke-width="1.1" fill="none"/>
<circle cx="30" cy="32" r="1" fill="#5a6ac8"/>
<path d="M0 26.5 Q5 26 7.5 32.5 L4.5 35 L0 34Z" fill="#b08aa2"/>
<path d="M0 36 L20 36 L20 40 L0 40Z" fill="#4c3038"/>
</g></svg></div>
<div style="position:absolute;left:110px;top:664px;width:4px;height:25px;background:#f8474d"></div>
<div style="position:absolute;left:115px;top:664px;width:78px;height:25px;background:#f4f4f4"></div>
<div class="t" style="left:122.3px;top:671.05px;font-size:12.7px;color:#7a7a7a;font-weight:700;font-style:normal;letter-spacing:0px;">Animation</div>
<div style="position:absolute;left:241px;top:658px;width:58px;height:38px;border-radius:4px;overflow:hidden;box-shadow:0 0 1px rgba(0,0,0,0.3);"><svg width="58" height="38" viewBox="0 0 58 38" preserveAspectRatio="none" style="display:block"><defs><filter id="tf7" filterUnits="userSpaceOnUse" x="0" y="0" width="58" height="38"><feGaussianBlur stdDeviation="0.8" edgeMode="duplicate"/></filter></defs><g filter="url(#tf7)"><rect width="58" height="38" fill="#3e3a1c"/>
<path d="M0 7 L58 7 L58 16 L0 16Z" fill="#4a3c20"/>
<path d="M8 17 Q18 10 30 9 L30 10.5 Q18 12 9 19Z" fill="#7a4a24"/>
<path d="M0 19 L58 19 L58 31.3 L0 31.3Z" fill="#3e5822"/>
<path d="M10 23 L50 23 L50 29 L10 29Z" fill="#5a7a30"/>
<path d="M0 7 L4.6 7 L6 28 L0 28Z" fill="#6a3a20"/>
<path d="M51 7 L58 7 L58 29 L53 29 Q54 18 51 7Z" fill="#8a5028"/>
<path d="M5.7 15 L10 15 L10 24 L5.7 24Z" fill="#a85040"/>
<path d="M17 14 L21.5 14 L21.5 23 L17 23Z" fill="#c8d0d8"/>
<path d="M20 18 L25 18 L25 23.4 L20 23.4Z" fill="#8a6a30"/>
<path d="M30.7 14.5 L36 14.5 L36 27 L30.7 27Z" fill="#c89070"/>
<path d="M31 21 L35.5 21 L35.5 25 L31 25Z" fill="#22222a"/>
<circle cx="33.4" cy="14.5" r="1.8" fill="#c85a20"/>
<path d="M41.6 14 L47 14 L47 29 L41.6 29Z" fill="#b87a90"/>
<path d="M41.6 21 L47 21 L47 25 L41.6 25Z" fill="#d84aa0"/>
<circle cx="44" cy="13" r="2.4" fill="#f09030"/>
<path d="M18.7 24 L32 24 L32 28.3 L18.7 28.3Z" fill="#d8d0b8"/>
<path d="M23 25 L27 25 L27 28.3 L23 28.3Z" fill="#3a5ab0"/>
<circle cx="25" cy="28" r="1.4" fill="#a060c0"/>
<path d="M6.8 24 L15 24 L15 27.7 L6.8 27.7Z" fill="#4a4a40"/>
<circle cx="6" cy="30" r="1.2" fill="#c04040"/><circle cx="48" cy="29.5" r="1.2" fill="#c04040"/></g><rect y="0" width="58" height="7.1" fill="#000"/><rect y="31.3" width="58" height="6.7" fill="#000"/></svg></div>
<div class="t" style="left:304.6px;top:670.03px;font-size:13.9px;color:#707070;font-weight:700;font-style:normal;letter-spacing:0.11px;">E01 / 020_grove / 020_0060_A</div>
<div class="t c" style="left:728px;width:60px;top:670.05px;font-size:14px;color:#888">2</div>
<div class="t c" style="left:788px;width:60px;top:670.05px;font-size:14px;color:#888">0</div>
<div class="t" style="left:859.5px;top:670.15px;font-size:14px;color:#808080;font-weight:400;font-style:normal;letter-spacing:0px;">2022-10-18</div>
<div class="t" style="left:969.5px;top:670.15px;font-size:14px;color:#808080;font-weight:400;font-style:normal;letter-spacing:0px;">2022-10-19</div>
<div style="position:absolute;left:1079px;top:664px;width:52px;height:21px;border-radius:11px;background:#ebebeb"></div>
<div class="t c" style="left:1079px;width:52px;top:670.31px;font-size:10.5px;font-weight:700;color:#3c3c3c;letter-spacing:1px;text-indent:1px">TODO</div>
<div style="position:absolute;left:1180px;top:664px;width:24px;height:24px;border-radius:12.0px;overflow:hidden;"><svg width="24" height="24" viewBox="0 0 24 24" preserveAspectRatio="none" style="display:block"><defs><filter id="mnf7" filterUnits="userSpaceOnUse" x="0" y="0" width="24" height="24"><feGaussianBlur stdDeviation="0.55" edgeMode="duplicate"/></filter></defs>
<rect width="24" height="24" fill="#437f36"/>
<g filter="url(#mnf7)">
<rect x="0" y="9" width="7" height="12" fill="#2e6428"/>
<rect x="18" y="5" width="6" height="8" fill="#62a244"/>
<rect x="17" y="14" width="7" height="6" fill="#3a7430"/>
<path d="M3 24 Q5 19.5 12 19.5 Q19 19.5 21 24Z" fill="#182030"/>
<path d="M5 21.5 Q7 19.5 10 20 L9 23 L5 24Z" fill="#7a8a9a"/>
<rect x="9" y="15" width="6.5" height="5.5" fill="#e6cca8"/>
<ellipse cx="12.4" cy="11.2" rx="5.3" ry="6.3" fill="#dcbc9a"/>
<path d="M7.3 13.5 Q8 18.5 12.4 18.6 Q16.8 18.5 17.5 13.5 L16.5 13.8 Q15.5 17 12.4 17 Q9.3 17 8.3 13.8Z" fill="#1e1812"/>
<path d="M11.2 16.8 L13.6 16.8 L12.4 18.5Z" fill="#1e1812"/>
<path d="M5.5 11 Q4.8 2 12.2 1.6 Q19.8 2 19.5 11 L18 8.5 Q17 6 12.2 6 Q7.6 6 6.8 9Z" fill="#7e6c5a"/>
<path d="M5.5 9 Q5 12 6.5 14 L7.3 10Z" fill="#3a2e22"/>
<path d="M19.5 9 Q20 12 18 14 L17.4 10Z" fill="#3a2e22"/>
<ellipse cx="10.2" cy="10.6" rx="0.9" ry="0.5" fill="#5a4a3a"/>
<ellipse cx="14.6" cy="10.6" rx="0.9" ry="0.5" fill="#5a4a3a"/>
</g></svg></div>
<div class="t" style="left:1223.5px;top:669.95px;font-size:14px;color:#888;font-weight:400;font-style:italic;letter-spacing:0px;">Empty comment</div>
<div style="position:absolute;left:40px;top:712px;width:40px;height:40px;border-radius:9px;overflow:hidden;"><svg width="40" height="40" viewBox="0 0 40 40" preserveAspectRatio="none" style="display:block"><defs><filter id="mf8" filterUnits="userSpaceOnUse" x="0" y="0" width="40" height="40"><feGaussianBlur stdDeviation="0.8" edgeMode="duplicate"/></filter></defs>
<rect width="40" height="40" fill="#45333f"/>
<g filter="url(#mf8)">
<rect x="0" y="0" width="40" height="9" fill="#3e2c38"/>
<path d="M33 6 L36 5 L30 14 L28 14Z" fill="#6a6a88"/>
<path d="M27 12 Q34 10 40 11 L40 19 L27 19Z" fill="#7e7444"/>
<path d="M28 16 L40 15 L40 19 L28 19Z" fill="#a09050"/>
<path d="M0 22 L11 22 L11 28 L0 28Z" fill="#56603c"/>
<path d="M6 21 Q22 18 40 18 L40 35 L6 35Z" fill="#5c3c46"/>
<path d="M8.5 20 Q8 8.5 17.5 7.2 Q26.5 7 28.5 15.5 Q23 13.5 18 15.2 Q12.5 17 11.5 23Z" fill="#a48ac8"/>
<path d="M10.5 14 Q14 9.5 21 9.5" stroke="#d6bce2" stroke-width="1.8" fill="none"/>
<path d="M22 9.5 Q26 10.5 27.5 14" stroke="#e0a080" stroke-width="1.1" fill="none"/>
<path d="M13 16.5 Q19 14 25 16 L24 21 L14 22Z" fill="#86a070"/>
<circle cx="18.8" cy="18.4" r="1.4" fill="#f4f4f4"/><circle cx="22" cy="18" r="1" fill="#e8e8e8"/>
<path d="M21 28 Q30 23.5 40 27 L40 40 L17 40 Q17 31 21 28Z" fill="#2e2c66"/>
<path d="M20 28.5 Q30 23.5 40 26.5" stroke="#d8a8b8" stroke-width="1.1" fill="none"/>
<circle cx="30" cy="32" r="1" fill="#5a6ac8"/>
<path d="M0 26.5 Q5 26 7.5 32.5 L4.5 35 L0 34Z" fill="#b08aa2"/>
<path d="M0 36 L20 36 L20 40 L0 40Z" fill="#4c3038"/>
</g></svg></div>
<div style="position:absolute;left:110px;top:719px;width:4px;height:25px;background:#f8474d"></div>
<div style="position:absolute;left:115px;top:719px;width:78px;height:25px;background:#f4f4f4"></div>
<div class="t" style="left:122.3px;top:726.05px;font-size:12.7px;color:#7a7a7a;font-weight:700;font-style:normal;letter-spacing:0px;">Animation</div>
<div style="position:absolute;left:241px;top:713px;width:58px;height:38px;border-radius:4px;overflow:hidden;box-shadow:0 0 1px rgba(0,0,0,0.3);"><svg width="58" height="38" viewBox="0 0 58 38" preserveAspectRatio="none" style="display:block"><defs><filter id="tf8" filterUnits="userSpaceOnUse" x="0" y="0" width="58" height="38"><feGaussianBlur stdDeviation="0.8" edgeMode="duplicate"/></filter></defs><g filter="url(#tf8)"><rect width="58" height="38" fill="#3a4a20"/>
<path d="M12 7 L58 7 L58 15 L12 15Z" fill="#4a3a18"/>
<path d="M0 7 L12.8 7 L13 31.3 L0 31.3Z" fill="#7a4828"/>
<path d="M3 7 L5 7 L5 31 L3 31Z" fill="#6a3a20"/>
<path d="M51 7 L58 7 L58 24 L54 24Z" fill="#7a4a20"/>
<path d="M13 21.8 L58 21.8 L58 31.3 L13 31.3Z" fill="#3e5a24"/>
<path d="M20 27 L58 27 L58 31.3 L20 31.3Z" fill="#4a6a2a"/>
<path d="M39.4 8 Q46 6 51 9 L51 21 Q44 22 40 18Z" fill="#3a6a30"/>
<circle cx="43" cy="19" r="2.2" fill="#5a9a40"/>
<path d="M13 17 L25 10 L26.5 12 L14 19.5Z" fill="#9a6030"/>
<path d="M21.5 11.4 L29 11 L36 13 L33 20 L27 24.5 L22 24Z" fill="#c8c0b0"/>
<path d="M27 16 L31 15 L31 19 L27 19.5Z" fill="#d07a40"/>
<path d="M32 8.7 L41.6 8.7 L41 13.6 L32.5 13.6Z" fill="#b09050"/>
<path d="M18.7 23.4 L23 23.4 L23 31 L18.7 31Z" fill="#c03020"/>
<path d="M14 23 L18 23 L18 29 L14 29Z" fill="#b8b8b0"/></g><rect y="0" width="58" height="7.1" fill="#000"/><rect y="31.3" width="58" height="6.7" fill="#000"/></svg></div>
<div class="t" style="left:304.6px;top:725.03px;font-size:13.9px;color:#707070;font-weight:700;font-style:normal;letter-spacing:0.11px;">E01 / 020_grove / 020_0070_A</div>
<div class="t c" style="left:728px;width:60px;top:725.05px;font-size:14px;color:#888">1</div>
<div class="t c" style="left:788px;width:60px;top:725.05px;font-size:14px;color:#888">0</div>
<div class="t" style="left:859.5px;top:725.15px;font-size:14px;color:#808080;font-weight:400;font-style:normal;letter-spacing:0px;">2022-08-22</div>
<div class="t" style="left:969.5px;top:725.15px;font-size:14px;color:#808080;font-weight:400;font-style:normal;letter-spacing:0px;">2022-08-22</div>
<div style="position:absolute;left:1079px;top:719px;width:52px;height:21px;border-radius:11px;background:#ebebeb"></div>
<div class="t c" style="left:1079px;width:52px;top:725.31px;font-size:10.5px;font-weight:700;color:#3c3c3c;letter-spacing:1px;text-indent:1px">TODO</div>
<div style="position:absolute;left:1180px;top:719px;width:24px;height:24px;border-radius:12.0px;overflow:hidden;"><svg width="24" height="24" viewBox="0 0 24 24" preserveAspectRatio="none" style="display:block"><defs><filter id="mnf8" filterUnits="userSpaceOnUse" x="0" y="0" width="24" height="24"><feGaussianBlur stdDeviation="0.55" edgeMode="duplicate"/></filter></defs>
<rect width="24" height="24" fill="#437f36"/>
<g filter="url(#mnf8)">
<rect x="0" y="9" width="7" height="12" fill="#2e6428"/>
<rect x="18" y="5" width="6" height="8" fill="#62a244"/>
<rect x="17" y="14" width="7" height="6" fill="#3a7430"/>
<path d="M3 24 Q5 19.5 12 19.5 Q19 19.5 21 24Z" fill="#182030"/>
<path d="M5 21.5 Q7 19.5 10 20 L9 23 L5 24Z" fill="#7a8a9a"/>
<rect x="9" y="15" width="6.5" height="5.5" fill="#e6cca8"/>
<ellipse cx="12.4" cy="11.2" rx="5.3" ry="6.3" fill="#dcbc9a"/>
<path d="M7.3 13.5 Q8 18.5 12.4 18.6 Q16.8 18.5 17.5 13.5 L16.5 13.8 Q15.5 17 12.4 17 Q9.3 17 8.3 13.8Z" fill="#1e1812"/>
<path d="M11.2 16.8 L13.6 16.8 L12.4 18.5Z" fill="#1e1812"/>
<path d="M5.5 11 Q4.8 2 12.2 1.6 Q19.8 2 19.5 11 L18 8.5 Q17 6 12.2 6 Q7.6 6 6.8 9Z" fill="#7e6c5a"/>
<path d="M5.5 9 Q5 12 6.5 14 L7.3 10Z" fill="#3a2e22"/>
<path d="M19.5 9 Q20 12 18 14 L17.4 10Z" fill="#3a2e22"/>
<ellipse cx="10.2" cy="10.6" rx="0.9" ry="0.5" fill="#5a4a3a"/>
<ellipse cx="14.6" cy="10.6" rx="0.9" ry="0.5" fill="#5a4a3a"/>
</g></svg></div>
<div class="t" style="left:1223.5px;top:724.95px;font-size:14px;color:#888;font-weight:400;font-style:italic;letter-spacing:0px;">Empty comment</div>
<div class="t" style="left:696px;top:777.98px;font-size:14.2px;color:#4a4a4a;font-weight:400;font-style:italic;letter-spacing:-0.45px;">9 Tasks</div><div id="lshadow"></div><div id="sbar"></div></div></body></html>
